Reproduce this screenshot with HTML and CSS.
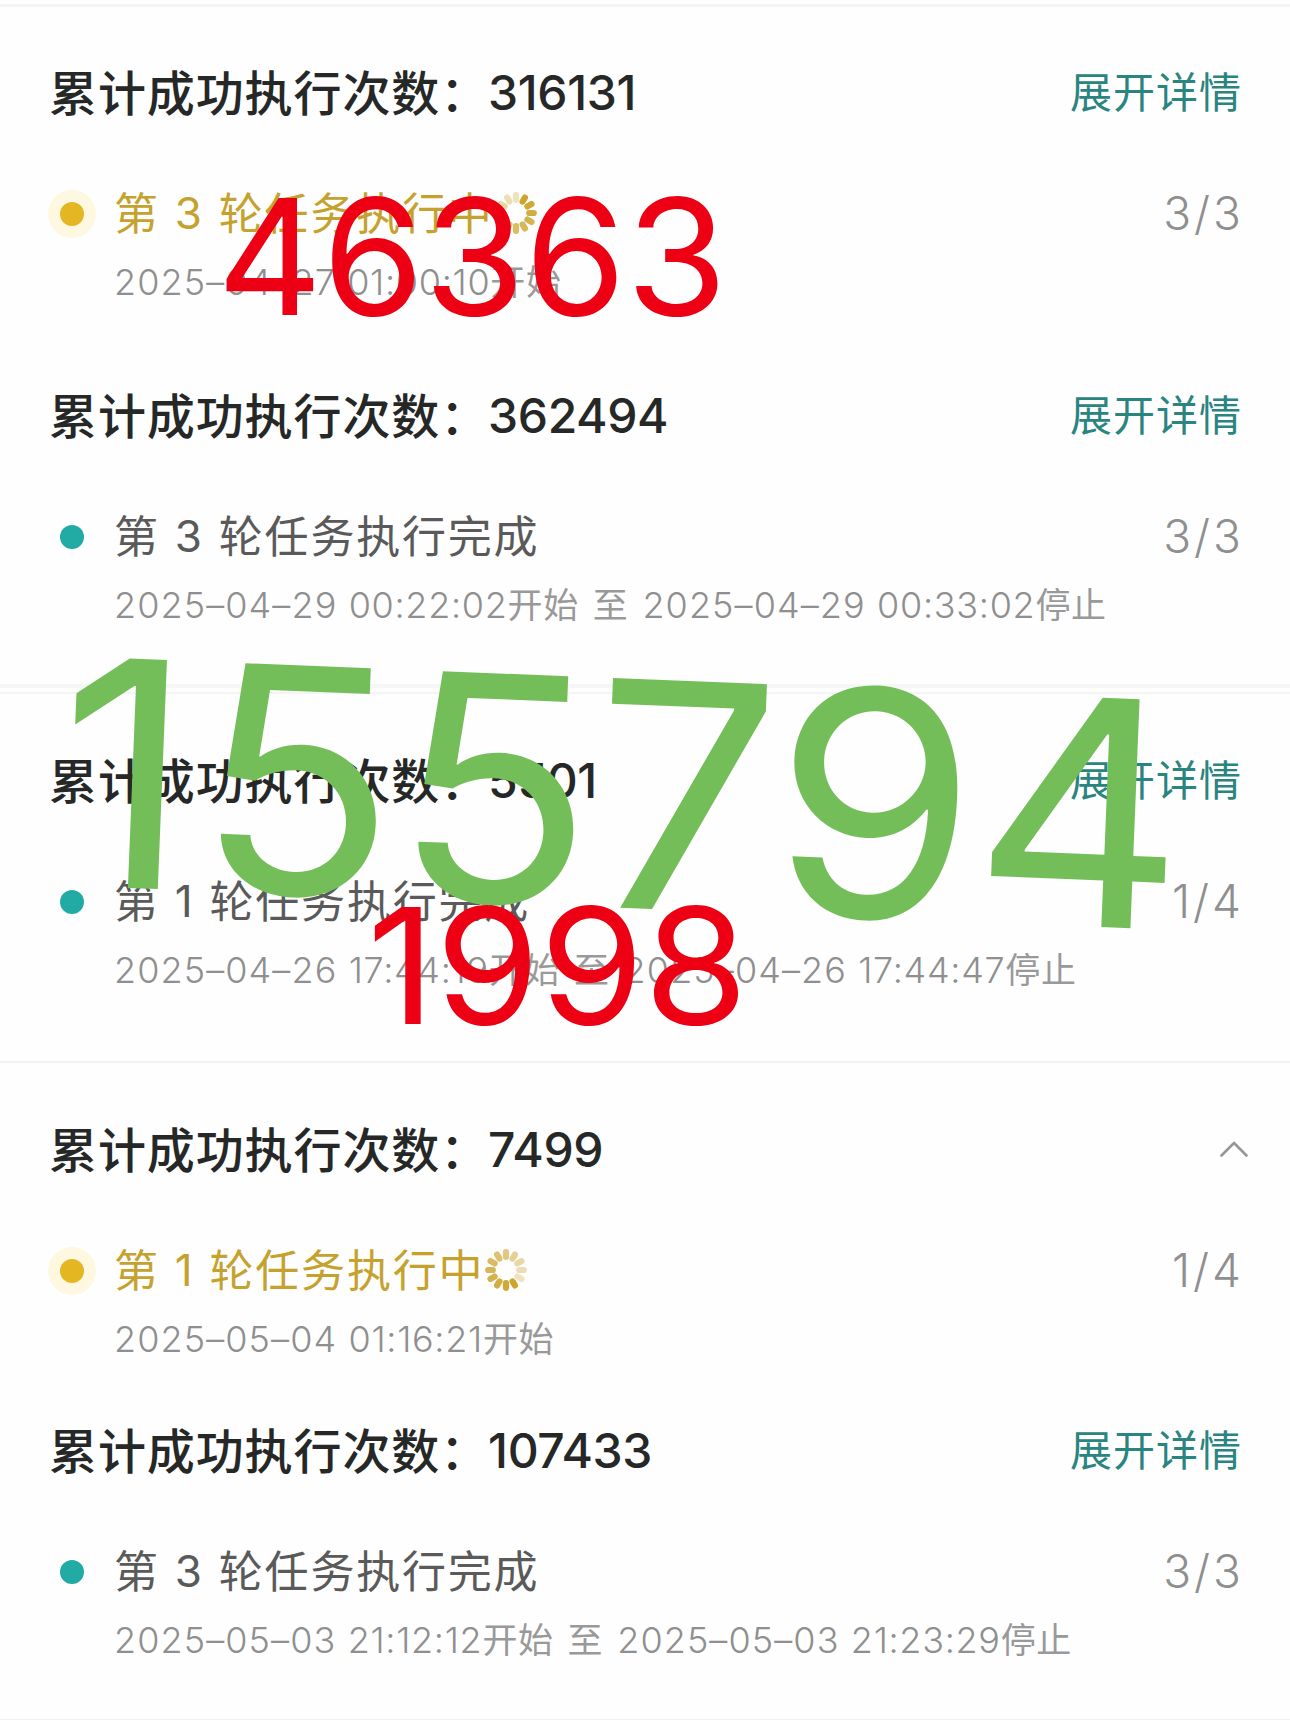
FILE: index.html
```
<!DOCTYPE html>
<html lang="zh-CN">
<head>
    <meta charset="UTF-8">
    <title>任务执行记录</title>
    <link rel="stylesheet" href="styles.css">
</head>
<body>
    <!-- 加载图标 -->
    <svg class="defs">
        <symbol id="spinner" viewBox="-22 -22 44 44">
            <g stroke="#cda52e" stroke-width="6.2" stroke-linecap="round">
                <path d="M0-13.2V-17.8" transform="rotate(150)"/>
                <path d="M0-13.2V-17.8" transform="rotate(180)" opacity=".95"/>
                <path d="M0-13.2V-17.8" transform="rotate(210)" opacity=".9"/>
                <path d="M0-13.2V-17.8" transform="rotate(240)" opacity=".85"/>
                <path d="M0-13.2V-17.8" transform="rotate(270)" opacity=".8"/>
                <path d="M0-13.2V-17.8" transform="rotate(300)" opacity=".74"/>
                <path d="M0-13.2V-17.8" transform="rotate(330)" opacity=".67"/>
                <path d="M0-13.2V-17.8" opacity=".6"/>
                <path d="M0-13.2V-17.8" transform="rotate(30)" opacity=".5"/>
                <path d="M0-13.2V-17.8" transform="rotate(60)" opacity=".42"/>
                <path d="M0-13.2V-17.8" transform="rotate(90)" opacity=".35"/>
                <path d="M0-13.2V-17.8" transform="rotate(120)" opacity=".3"/>
            </g>
        </symbol>
    </svg>
    <main class="page">
        <section class="group group-first">
            <article class="record">
                <div class="record-head">
                    <h2 class="title">累计成功执行次数：<span class="count">316131</span></h2>
                    <a class="detail">展开详情</a>
                </div>
                <div class="task running">
                    <i class="dot"></i>
                    <div class="task-name">第<span class="round">3</span>轮任务执行中</div>
                    <svg class="spinner spinner-turned"><use href="#spinner"/></svg>
                    <div class="progress">3/3</div>
                </div>
                <div class="time"><span class="num">2025–04–27 <span class="clock">01:00:10</span></span>开始</div>
            </article>
            <article class="record">
                <div class="record-head">
                    <h2 class="title">累计成功执行次数：<span class="count">362494</span></h2>
                    <a class="detail">展开详情</a>
                </div>
                <div class="task">
                    <i class="dot"></i>
                    <div class="task-name">第<span class="round">3</span>轮任务执行完成</div>
                    <div class="progress">3/3</div>
                </div>
                <div class="time"><span class="num">2025–04–29 <span class="clock">00:22:02</span></span>开始<span class="to">至</span><span class="num">2025–04–29 <span class="clock">00:33:02</span></span>停止</div>
            </article>
        </section>
        <section class="group group-second">
            <article class="record">
                <div class="record-head">
                    <h2 class="title">累计成功执行次数：<span class="count">5501</span></h2>
                    <a class="detail">展开详情</a>
                </div>
                <div class="task">
                    <i class="dot"></i>
                    <div class="task-name">第<span class="round">1</span>轮任务执行完成</div>
                    <div class="progress">1/4</div>
                </div>
                <div class="time"><span class="num">2025–04–26 <span class="clock">17:44:19</span></span>开始<span class="to">至</span><span class="num">2025–04–26 <span class="clock">17:44:47</span></span>停止</div>
            </article>
        </section>
        <section class="group group-third">
            <article class="record">
                <div class="record-head">
                    <h2 class="title">累计成功执行次数：<span class="count">7499</span></h2>
                    <svg class="arrow" viewBox="0 0 28 16"><path d="M1.500 14.500L14 2l12.500 12.500"/></svg>
                </div>
                <div class="task running">
                    <i class="dot"></i>
                    <div class="task-name">第<span class="round">1</span>轮任务执行中</div>
                    <svg class="spinner"><use href="#spinner"/></svg>
                    <div class="progress">1/4</div>
                </div>
                <div class="time"><span class="num">2025–05–04 <span class="clock">01:16:21</span></span>开始</div>
            </article>
            <article class="record">
                <div class="record-head">
                    <h2 class="title">累计成功执行次数：<span class="count">107433</span></h2>
                    <a class="detail">展开详情</a>
                </div>
                <div class="task">
                    <i class="dot"></i>
                    <div class="task-name">第<span class="round">3</span>轮任务执行完成</div>
                    <div class="progress">3/3</div>
                </div>
                <div class="time"><span class="num">2025–05–03 <span class="clock">21:12:12</span></span>开始<span class="to">至</span><span class="num">2025–05–03 <span class="clock">21:23:29</span></span>停止</div>
            </article>
        </section>
        <!-- 标注数字 -->
        <div class="mark mark-total"><span class="lead">1</span>55794</div>
        <div class="mark mark-red mark-a">46363</div>
        <div class="mark mark-red mark-b">1998</div>
    </main>
</body>
</html>
```
FILE: styles.css
```
* {
    box-sizing: border-box;
}
body {
    margin: 0;
    background-color: #fefefe;
    font-family: Inter, "Noto Sans CJK SC", sans-serif;
}
.defs {
    display: none;
}
.page {
    position: relative;
    width: 1290px;
    height: 1720px;
    overflow: hidden;
    padding-top: 4px;
    border-bottom: 1px solid #f0f0f0;
}
/* 分组 */
.group {
    display: flex;
    flex-direction: column;
    padding: 0 49px;
}
.group-first {
    height: 684px;
    padding-top: 55px;
    gap: 78px;
    border-top: 3px solid #f4f4f4;
    border-bottom: 4px solid #f6f6f6;
}
.group-second {
    height: 369px;
    margin-top: 4px;
    padding-top: 56px;
    border-top: 2px solid #f4f4f4;
}
.group-third {
    padding-top: 56px;
    gap: 56px;
    border-top: 2px solid #f2f2f2;
}
/* 单条记录 */
.record-head {
    display: flex;
    justify-content: space-between;
    align-items: center;
    height: 60px;
}
.title {
    margin: 3px 0 0;
    color: #262828;
    font-size: 48px;
    line-height: 60px;
    font-weight: 500;
    letter-spacing: 0.9px;
    white-space: nowrap;
}
.count {
    margin-left: -1px;
    line-height: 1;
    letter-spacing: -0.4px;
    vertical-align: 1px;
}
.detail {
    margin-top: 1px;
    margin-right: -1px;
    color: #2a8480;
    font-size: 42px;
    line-height: 60px;
    letter-spacing: 1px;
}
.arrow {
    width: 28px;
    height: 16px;
    margin-right: -7px;
    fill: none;
    stroke: #969696;
    stroke-width: 2.6;
    stroke-linecap: round;
    stroke-linejoin: round;
}
.task {
    display: flex;
    align-items: center;
    height: 60px;
    margin-top: 62px;
    padding-left: 11px;
    color: #5a5a5a;
}
.running {
    color: #c5a22e;
}
.dot {
    width: 24px;
    height: 24px;
    margin-top: -1px;
    margin-right: 30px;
    border-radius: 50%;
    background-color: #22aba4;
}
.running .dot {
    background-color: #e3b622;
    box-shadow: 0 0 0 12px #fef8e0;
}
.task-name {
    font-size: 44px;
    line-height: 60px;
    letter-spacing: 1.8px;
    white-space: nowrap;
}
.round {
    margin: 0 15px;
    line-height: 1;
    vertical-align: 1px;
}
.spinner {
    width: 44px;
    height: 44px;
    margin-top: -2px;
}
.spinner-turned {
    transform: rotate(-120deg);
}
.progress {
    margin-top: -3px;
    margin-left: auto;
    margin-right: -3px;
    color: #8f8f8f;
    font-size: 46px;
    font-weight: 300;
    letter-spacing: 3px;
}
.time {
    height: 50px;
    margin-top: 13px;
    padding-left: 65px;
    color: #999;
    font-size: 35px;
    line-height: 50px;
    letter-spacing: 0.6px;
    white-space: nowrap;
}
.num {
    color: #8f8f8f;
    font-size: 36px;
    font-weight: 300;
    letter-spacing: 1.1px;
}
.clock {
    letter-spacing: 0.7px;
}
.to {
    margin: 0 14px;
}
/* 标注 */
.mark {
    position: absolute;
    line-height: 1;
    white-space: nowrap;
    transform-origin: 0 50%;
}
.mark-red {
    color: #ed0014;
    font-size: 161px;
}
.mark-a {
    left: 217px;
    top: 176px;
    transform: scaleX(1.015);
}
.mark-b {
    left: 367px;
    top: 885px;
    transform: scaleX(1.045);
}
.mark-total {
    left: 58px;
    top: 613px;
    color: #74be5a;
    font-size: 315px;
    letter-spacing: -1.5px;
    transform: rotate(2.3deg) scaleX(1.04);
}
.lead {
    margin-right: 8px;
}
```
